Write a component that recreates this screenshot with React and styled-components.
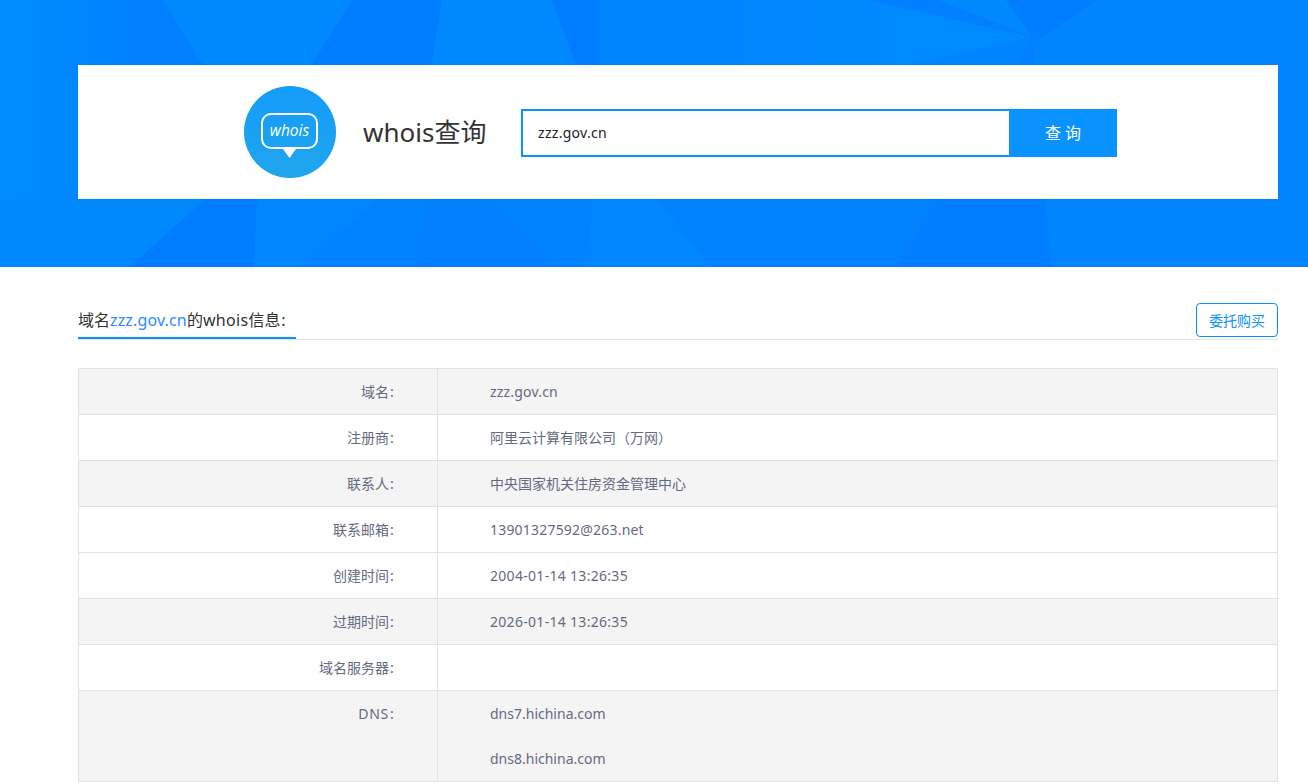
import React from "react";
import styled, { createGlobalStyle } from "styled-components";

const Global = createGlobalStyle`
  html, body { margin: 0; padding: 0; background: #fff; overflow: hidden; }
  body { font-family: "Noto Sans", "Noto Sans CJK SC", sans-serif; color: #333; }
  * { box-sizing: border-box; }
`;

const Hero = styled.header`
  position: relative;
  height: 267px;
  background: #0085ff;
  padding: 65px 30px 0 78px;
  overflow: hidden;
`;
const Facets = styled.svg`
  position: absolute;
  inset: 0;
  width: 1308px;
  height: 267px;
`;
const Card = styled.div`
  position: relative;
  width: 1200px;
  height: 134px;
  background: #fff;
  display: flex;
  align-items: center;
  padding-left: 166px;
`;
const LogoBox = styled.svg`
  width: 92px;
  height: 92px;
  flex: none;
`;
const Title = styled.h1`
  margin: 0 0 0 27px;
  width: 158px;
  flex: none;
  font-size: 26px;
  font-weight: 400;
  line-height: 36px;
  color: #333;
  white-space: nowrap;
`;
const SearchForm = styled.div`
  display: flex;
  width: 596px;
  height: 48px;
  margin-top: 2px;
`;
const SearchInput = styled.div`
  flex: 1;
  border: 2px solid #0a92ff;
  border-right: none;
  background: #fff;
  padding-left: 15px;
  font-size: 14px;
  letter-spacing: 0.3px;
  line-height: 44px;
  color: #222;
`;
const SearchButton = styled.button`
  width: 108px;
  border: none;
  background: #0a92ff;
  color: #fff;
  font: inherit;
  font-size: 16px;
  letter-spacing: 4px;
  padding: 0 0 2px 4px;
`;
const Main = styled.main`
  width: 1200px;
  margin: 36px 0 0 78px;
`;
const SectionHead = styled.div`
  display: flex;
  justify-content: space-between;
  align-items: flex-end;
  height: 37px;
  border-bottom: 1px solid #e2e2e2;
`;
const HeadTab = styled.div`
  width: 218px;
  height: 36px;
  border-bottom: 2px solid #0a92ff;
  font-size: 16px;
  line-height: 34px;
  color: #333;
  white-space: nowrap;
`;
const DomainLink = styled.span`
  color: #2b8cff;
  letter-spacing: 0.15px;
`;
const Latin = styled.span`
  letter-spacing: ${(p) => p.$spacing || "0.3px"};
`;
const Colon = styled.span`
  display: inline-block;
  width: 6px;
  text-align: center;
`;
const BuyButton = styled.button`
  width: 82px;
  height: 34px;
  margin-bottom: 2px;
  border: 1px solid #0a92ff;
  border-radius: 4px;
  background: #fff;
  color: #0a92ff;
  font: inherit;
  font-size: 14px;
  padding: 0;
`;
const InfoTable = styled.div`
  margin-top: 28px;
  border: 1px solid #e2e2e2;
  border-bottom: none;
`;
const Row = styled.div`
  display: flex;
  background: ${(p) => (p.$shaded ? "#f4f4f4" : "#fff")};
  border-bottom: 1px solid #e2e2e2;
`;
const Label = styled.div`
  width: 359px;
  flex: none;
  padding-right: 42px;
  border-right: 1px solid #e2e2e2;
  text-align: right;
  font-size: 14px;
  line-height: 45px;
  color: #666a80;
`;
const Value = styled.div`
  flex: 1;
  padding-left: 52px;
  font-size: 14px;
  color: #666a80;
`;
const ValueLine = styled.div`
  height: 45px;
  line-height: 45px;
  letter-spacing: ${(p) => p.$spacing};
`;

const rows = [
  ["域名", ["zzz.gov.cn"], "0.2px"],
  ["注册商", ["阿里云计算有限公司（万网）"], "0"],
  ["联系人", ["中央国家机关住房资金管理中心"], "0"],
  ["联系邮箱", ["13901327592@263.net"], "0.2px"],
  ["创建时间", ["2004-01-14 13:26:35"], "0.3px"],
  ["过期时间", ["2026-01-14 13:26:35"], "0.3px"],
  ["域名服务器", [""], "0"],
  ["DNS", ["dns7.hichina.com", "dns8.hichina.com"], "0"],
];
const shaded = [true, false, true, false, false, true, false, true];

const dark = "#007cff";
const polys = [
  ["0,0 78,0 78,199 0,199", "url(#edgeFade)"],
  ["78,0 163,0 203,65 78,65", "url(#leftFade)"],
  ["163,0 352,0 312,65 203,65", "#0088ff"],
  ["352,0 442,0 432,65 312,65", dark],
  ["442,0 552,0 576,65 432,65", "#0089ff"],
  ["552,0 600,0 600,65 576,65", dark],
  ["868,0 1033,37 908,65 720,65 720,0", "url(#rightFade)"],
  ["868,0 938,0 1033,37", "#0080ff"],
  ["938,0 1006,0 1033,37", "#0088ff"],
  ["1006,0 1097,0 1035,42 1033,37", dark],
  ["908,65 1033,37 1016,65", "#0084ff"],
  ["1016,65 1033,37 1033,65", "#0080ff"],
  ["0,199 205,199 130,267 0,267", "#0089ff"],
  ["205,199 257,199 254,267 130,267", dark],
  ["257,199 375,199 305,267 254,267", "#0087ff"],
  ["375,199 427,199 415,267 305,267", "#0081ff"],
  ["427,199 487,199 558,267 415,267", "#0080ff"],
  ["487,199 593,199 587,267 558,267", "#0082ff"],
  ["593,199 657,199 710,267 587,267", "#0087ff"],
  ["657,199 936,199 898,267 710,267", "#0082ff"],
  ["936,199 1046,199 1051,267 898,267", "#007eff"],
];

function Logo() {
  return (
    <LogoBox viewBox="0 0 92 92">
      <defs>
        <linearGradient id="logoFill" x1="0" y1="0" x2="0" y2="1">
          <stop offset="0" stopColor="#149cfb" />
          <stop offset="1" stopColor="#20a5ec" />
        </linearGradient>
      </defs>
      <circle cx="46" cy="46" r="46" fill="url(#logoFill)" />
      <rect x="18" y="28" width="55" height="34" rx="9" fill="none" stroke="#fff" strokeWidth="2" />
      <path d="M39 63h13l-6.500 9z" fill="#fff" />
      <text x="45.500" y="50" textAnchor="middle" fontFamily="'Open Sans', sans-serif" fontStyle="italic" fontWeight="400" fontSize="15.500" fill="#fff">
        whois
      </text>
    </LogoBox>
  );
}

export default function App() {
  return (
    <>
      <Global />
      <Hero>
        <Facets viewBox="0 0 1308 267">
          <defs>
            <linearGradient id="edgeFade" x1="0" y1="0" x2="1" y2="0">
              <stop offset="0" stopColor="#008cff" />
              <stop offset="1" stopColor="#0087ff" />
            </linearGradient>
            <linearGradient id="leftFade" x1="0" y1="0" x2="1" y2="0">
              <stop offset="0" stopColor="#0087ff" />
              <stop offset="0.45" stopColor="#0080ff" />
              <stop offset="1" stopColor="#007eff" />
            </linearGradient>
            <linearGradient id="rightFade" x1="0" y1="0" x2="1" y2="0">
              <stop offset="0" stopColor="#0085ff" />
              <stop offset="0.6" stopColor="#008aff" />
              <stop offset="1" stopColor="#008aff" />
            </linearGradient>
          </defs>
          {polys.map(([points, fill]) => (
            <polygon key={points} points={points} fill={fill} />
          ))}
        </Facets>
        <Card>
          <Logo />
          <Title>whois查询</Title>
          <SearchForm>
            <SearchInput>zzz.gov.cn</SearchInput>
            <SearchButton>查询</SearchButton>
          </SearchForm>
        </Card>
      </Hero>
      <Main>
        <SectionHead>
          <HeadTab>
            域名<DomainLink>zzz.gov.cn</DomainLink>的<Latin>whois</Latin>信息<Colon>:</Colon>
          </HeadTab>
          <BuyButton>委托购买</BuyButton>
        </SectionHead>
        <InfoTable>
          {rows.map(([label, values, spacing], i) => (
            <Row key={label} $shaded={shaded[i]}>
              <Label>
                {label === "DNS" ? <Latin $spacing="0.7px">{label}</Latin> : label}
                <Colon>:</Colon>
              </Label>
              <Value>
                {values.map((v) => (
                  <ValueLine key={v} $spacing={spacing}>
                    {v}
                  </ValueLine>
                ))}
              </Value>
            </Row>
          ))}
        </InfoTable>
      </Main>
    </>
  );
}
